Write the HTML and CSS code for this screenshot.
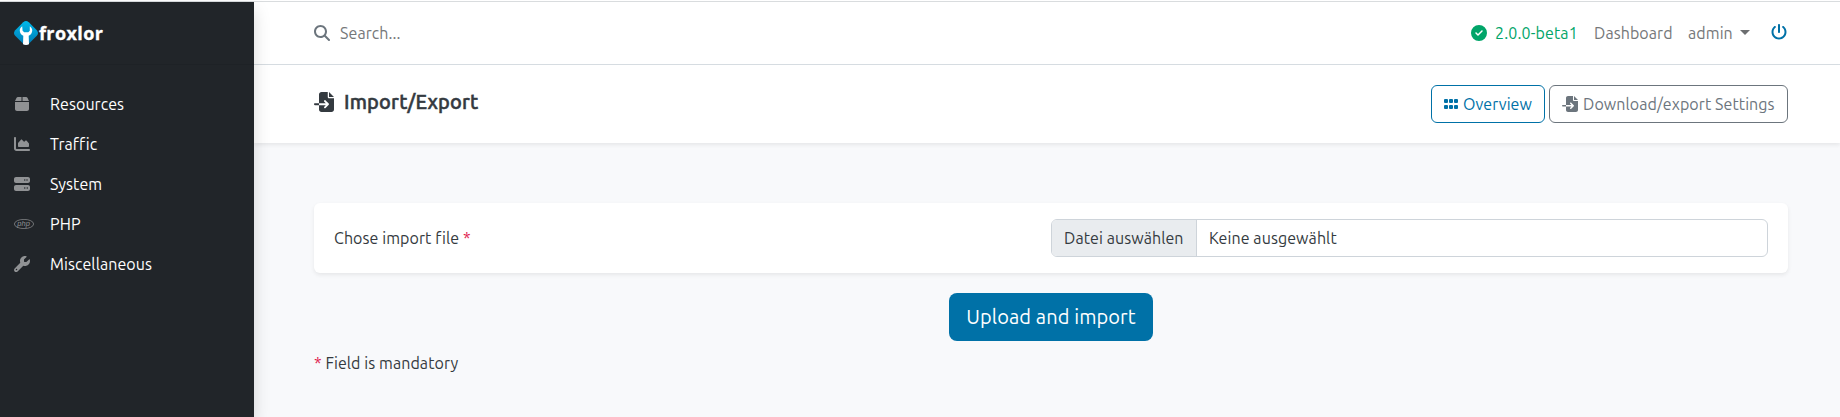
FILE: index.html
```html
<!DOCTYPE html>
<html lang="en">
<head>
<meta charset="utf-8">
<title>Froxlor - Import/Export</title>
<link rel="stylesheet" href="styles.css">
</head>
<body>
<svg class="defs" aria-hidden="true">
  <symbol id="import" viewBox="0 0 512 512"><path d="M128 64c0-35.3 28.7-64 64-64H352V128c0 17.7 14.3 32 32 32H512V448c0 35.3-28.7 64-64 64H192c-35.3 0-64-28.7-64-64V336H302.1l-39 39c-9.4 9.4-9.4 24.6 0 33.9s24.6 9.4 33.9 0l80-80c9.4-9.4 9.4-24.6 0-33.9l-80-80c-9.4-9.4-24.6-9.4-33.9 0s-9.4 24.6 0 33.9l39 39H128V64zm0 224v48H24c-13.3 0-24-10.7-24-24s10.7-24 24-24H128zM512 128H384V0L512 128z"/></symbol>
</svg>
<div class="app">
  <aside class="sidebar">
    <a class="brand">
      <svg class="logo" viewBox="0 0 24 24">
        <defs><linearGradient id="lg" x1="0" y1="0" x2="0" y2="1"><stop offset="0" stop-color="#00b9ea"/><stop offset="1" stop-color="#0079b4"/></linearGradient></defs>
        <path fill="url(#lg)" d="M9.2 1.2Q12 -1.2 14.8 1.2L22.8 9.2Q25.2 12 22.8 14.8L14.8 22.8Q12 25.2 9.2 22.8L1.2 14.8Q-1.2 12 1.2 9.2Z"/>
        <path fill="#fff" d="M8.2 5.2C6.4 6.4 5.6 8.2 5.8 10C6 12.3 7.400 13.9 9.300 14.700L9 23.300Q12 24.600 15 23.300L14.700 14.700C16.600 13.900 18 12.300 18.200 10C18.400 8.200 17.600 6.400 15.800 5.200V9.700L14.300 11.300H10.200L8.600 9.700Z"/>
      </svg>
      <span class="wordmark">froxlor</span>
    </a>
    <nav class="menu">
      <a class="item"><svg class="ic box" viewBox="0 0 448 512"><path d="M50.7 58.5L0 160H208V32H93.7C75.5 32 58.9 42.3 50.7 58.5zM240 160H448L397.3 58.5C389.1 42.3 372.5 32 354.3 32H240V160zM448 192H0V416c0 35.300 28.700 64 64 64H384c35.300 0 64-28.700 64-64V192z"/></svg><span>Resources</span></a>
      <a class="item"><svg class="ic" viewBox="0 0 512 512"><path d="M64 64c0-17.700-14.300-32-32-32S0 46.300 0 64V400c0 44.200 35.800 80 80 80H480c17.700 0 32-14.300 32-32s-14.300-32-32-32H80c-8.800 0-16-7.200-16-16V64zm96 288H448c17.700 0 32-14.300 32-32V251.800c0-7.600-2.700-15-7.700-20.800l-65.800-76.800c-12.100-14.200-33.700-15-46.900-1.800l-21 21c-10 10-26.400 9.200-35.400-1.600l-39.200-47c-12.600-15.100-35.700-15.400-48.700-.6L135.900 215c-5.100 5.800-7.900 13.300-7.900 21.100v84c0 17.700 14.300 32 32 32z"/></svg><span>Traffic</span></a>
      <a class="item"><svg class="ic" viewBox="0 0 512 512"><path d="M64 32C28.700 32 0 60.700 0 96v64c0 35.300 28.700 64 64 64H448c35.300 0 64-28.700 64-64V96c0-35.300-28.700-64-64-64H64zm280 72a24 24 0 1 1 0 48 24 24 0 1 1 0-48zm48 24a24 24 0 1 1 48 0 24 24 0 1 1 -48 0zM64 288c-35.300 0-64 28.700-64 64v64c0 35.300 28.700 64 64 64H448c35.300 0 64-28.700 64-64V352c0-35.300-28.700-64-64-64H64zm280 72a24 24 0 1 1 0 48 24 24 0 1 1 0-48zm56 24a24 24 0 1 1 48 0 24 24 0 1 1 -48 0z"/></svg><span>System</span></a>
      <a class="item"><svg class="ic php" viewBox="0 0 20 10"><ellipse cx="10" cy="5" rx="9.600" ry="4.600" fill="none" stroke="#909294" stroke-width=".7"/><text x="9.700" y="6.800" text-anchor="middle">php</text></svg><span>PHP</span></a>
      <a class="item"><svg class="ic" viewBox="0 0 512 512"><path d="M352 320c88.400 0 160-71.600 160-160c0-15.300-2.200-30.100-6.200-44.200c-3.100-10.800-16.400-13.200-24.300-5.300l-76.800 76.800c-3 3-7.100 4.700-11.300 4.700H336c-8.800 0-16-7.200-16-16V118.600c0-4.200 1.700-8.300 4.700-11.300l76.800-76.800c7.900-7.900 5.400-21.200-5.300-24.300C382.100 2.200 367.300 0 352 0C263.600 0 192 71.600 192 160c0 19.100 3.400 37.500 9.500 54.500L19.900 396.100C7.200 408.800 0 426.100 0 444.100C0 481.600 30.400 512 67.900 512c18 0 35.300-7.200 48-19.900L297.500 310.500c17 6.200 35.400 9.500 54.500 9.500zM80 408a24 24 0 1 1 0 48 24 24 0 1 1 0-48z"/></svg><span>Miscellaneous</span></a>
    </nav>
  </aside>
  <main class="main">
    <header class="topbar">
      <div class="search">
        <svg class="ic" viewBox="0 0 512 512"><path d="M416 208c0 45.900-14.900 88.300-40 122.700L502.600 457.400c12.500 12.500 12.500 32.800 0 45.300s-32.800 12.500-45.300 0L330.700 376c-34.400 25.200-76.800 40-122.700 40C93.100 416 0 322.900 0 208S93.100 0 208 0S416 93.100 416 208zM208 352a144 144 0 1 0 0-288 144 144 0 1 0 0 288z"/></svg>
        <span>Search...</span>
      </div>
      <div class="links">
        <a class="version"><svg class="ic" viewBox="0 0 512 512"><path d="M256 512A256 256 0 1 0 256 0a256 256 0 1 0 0 512zM369 209L241 337c-9.400 9.400-24.600 9.400-33.900 0l-64-64c-9.400-9.400-9.400-24.600 0-33.900s24.600-9.400 33.900 0l47 47L335 175c9.400-9.400 24.600-9.400 33.900 0s9.400 24.600 0 33.900z"/></svg><span>2.0.0-beta1</span></a>
        <a class="dash"><span>Dashboard</span></a>
        <a class="admin"><span>admin</span><i class="caret"></i></a>
        <a class="power"><svg class="ic" viewBox="0 0 512 512"><path d="M288 32c0-17.700-14.300-32-32-32s-32 14.300-32 32V256c0 17.700 14.300 32 32 32s32-14.300 32-32V32zM143.500 120.600c13.600-11.300 15.400-31.500 4.100-45.100s-31.500-15.400-45.100-4.100C49.700 115.400 16 181.800 16 256c0 132.500 107.500 240 240 240s240-107.500 240-240c0-74.200-33.800-140.600-86.600-184.600c-13.600-11.300-33.800-9.400-45.100 4.100s-9.400 33.800 4.100 45.100c38.900 32.300 63.500 81 63.500 135.400c0 97.200-78.800 176-176 176s-176-78.800-176-176c0-54.400 24.700-103.100 63.500-135.400z"/></svg></a>
      </div>
    </header>
    <section class="heading">
      <h1 class="title"><svg class="ic big" viewBox="0 0 512 512"><use href="#import"/></svg><span class="title-text">Import/Export</span></h1>
      <div class="actions">
        <a class="btn primary"><svg class="ic grid" viewBox="0 0 14 10"><rect width="4" height="4" rx="1"/><rect x="5" width="4" height="4" rx="1"/><rect x="10" width="4" height="4" rx="1"/><rect y="6" width="4" height="4" rx="1"/><rect x="5" y="6" width="4" height="4" rx="1"/><rect x="10" y="6" width="4" height="4" rx="1"/></svg><span>Overview</span></a>
        <a class="btn secondary"><svg class="ic" viewBox="0 0 512 512"><use href="#import"/></svg><span>Download/export Settings</span></a>
      </div>
    </section>
    <form class="content">
      <div class="card">
        <label><span>Chose import file</span> <b class="req">*</b></label>
        <div class="file"><span class="choose">Datei auswählen</span><span class="none">Keine ausgewählt</span></div>
      </div>
      <button class="submit" type="button">Upload and import</button>
      <p class="hint"><b class="req">*</b> Field is mandatory</p>
    </form>
  </main>
</div>
</body>
</html>
```
FILE: styles.css
```css
* { box-sizing: border-box; }
body {
  margin: 0;
  height: 417px;
  overflow: hidden;
  padding-top: 1px;
  background: #fff;
  color: #343a40;
  font: 16px/24px Ubuntu, "Noto Sans", sans-serif;
  letter-spacing: .08px;
}
.defs { display: none; }
.app { display: flex; height: 416px; border-top: 1px solid #d9dcde; }
.ic { width: 16px; height: 16px; fill: currentColor; flex: none; display: block; }
span { white-space: nowrap; }

.sidebar {
  width: 254px;
  flex: none;
  background: #212529;
  box-shadow: 0 8px 16px rgba(0, 0, 0, .15);
  position: relative;
  z-index: 1;
}
.brand {
  display: flex;
  align-items: center;
  height: 63px;
  padding: 0 14px 1px;
  gap: 1px;
  color: #fff;
  border-bottom: 1px solid #1e2226;
}
.logo { width: 24px; height: 24px; }
.wordmark {
  font: 700 18px/24px "Open Sans", sans-serif;
  letter-spacing: .4px;
  -webkit-text-stroke: .3px #fff;
}
.menu { padding-top: 19px; }
.item {
  display: flex;
  align-items: center;
  height: 40px;
  padding-left: 50px;
  color: #fff;
}
.item .ic { margin-left: -36px; margin-right: 20px; color: #909294; }
.item .box { width: 14px; margin-left: -35px; margin-right: 21px; }
.item .php { width: 20px; height: 10px; margin-right: 16px; }
.php text { font: italic 400 7.5px "Liberation Sans", sans-serif; }

.main { flex: 1; display: flex; flex-direction: column; background: #f8f9fb; }
.topbar {
  display: flex;
  justify-content: space-between;
  height: 63px;
  padding: 0 53px 0 60px;
  background: #fff;
  border-bottom: 1px solid #d8dee3;
  color: #757779;
}
.search { display: flex; align-items: center; gap: 10px; }
.search .ic { color: #6c757d; }
.links { display: flex; align-items: center; }
.version { display: flex; align-items: center; color: #01a569; gap: 8px; width: 123px; letter-spacing: .15px; }
.dash { width: 94px; }
.admin { display: flex; align-items: center; width: 83px; }
.caret {
  margin-left: auto;
  margin-right: 21px;
  margin-top: -1px;
  border: 5px solid transparent;
  border-top-color: #6c6e70;
  border-bottom: 0;
}
.power { color: #0071a7; padding-bottom: 2px; }

.heading {
  display: flex;
  justify-content: space-between;
  height: 78px;
  padding: 20px 52px 20px 60px;
  background: #fff;
  box-shadow: 0 2px 4px rgba(0, 0, 0, .075);
}
.title { display: flex; align-items: center; gap: 10px; height: 33px; margin: 0; font-size: 20px; font-weight: 500; }
.title-text { letter-spacing: .17px; -webkit-text-stroke: .5px currentColor; }
.big { width: 20px; height: 20px; }
.actions { display: flex; gap: 4px; }
.btn {
  display: flex;
  align-items: center;
  gap: 5px;
  height: 38px;
  padding-left: 12px;
  border: 1px solid currentColor;
  border-radius: 6px;
}
.primary { width: 114px; color: #0071a7; }
.secondary { width: 239px; color: #6c757d; }
.grid { width: 14px; height: 10px; }

.content { display: flex; flex-direction: column; padding: 60px 52px 0 60px; }
.card {
  display: flex;
  align-items: center;
  justify-content: space-between;
  height: 70px;
  padding: 0 20px;
  background: #fff;
  border-radius: 6px;
  box-shadow: 0 2px 4px rgba(0, 0, 0, .075);
}
.req { color: #e01a4f; font-weight: 400; }
.file {
  display: flex;
  width: 717px;
  height: 38px;
  border: 1px solid #ced4da;
  border-radius: 6px;
  overflow: hidden;
  line-height: 36px;
}
.choose { width: 145px; padding-left: 12px; background: #e9ecef; border-right: 1px solid #ced4da; }
.none { padding-left: 12px; }
.submit {
  align-self: center;
  width: 204px;
  height: 48px;
  margin-top: 20px;
  padding: 0;
  border: 0;
  border-radius: 8px;
  background: #0071a7;
  color: #fff;
  font: 20px/30px Ubuntu, "Noto Sans", sans-serif;
  letter-spacing: .1px;
}
.hint { margin: 10px 0 0; }
```
